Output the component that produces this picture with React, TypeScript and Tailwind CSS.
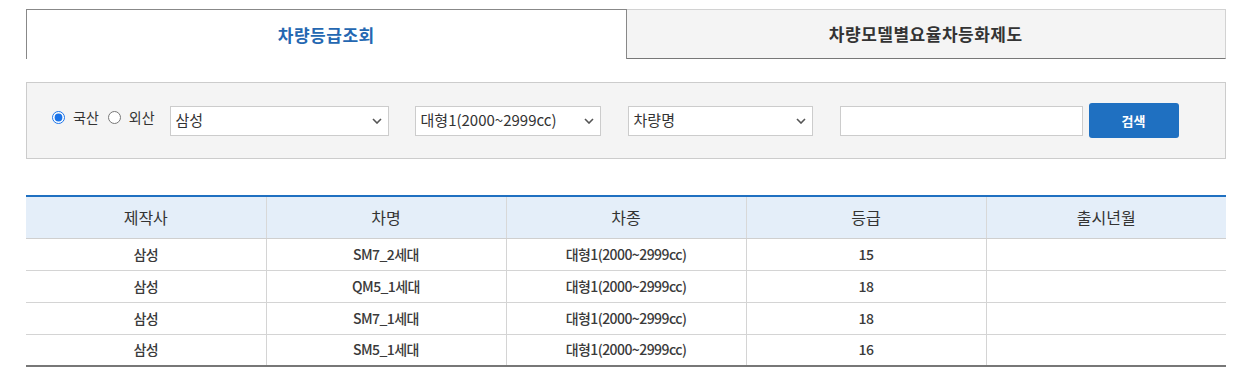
import React, { useState } from 'react';

const rows = [
  { maker: '삼성', name: 'SM7_2세대', type: '대형1(2000~2999cc)', grade: '15', date: '' },
  { maker: '삼성', name: 'QM5_1세대', type: '대형1(2000~2999cc)', grade: '18', date: '' },
  { maker: '삼성', name: 'SM7_1세대', type: '대형1(2000~2999cc)', grade: '18', date: '' },
  { maker: '삼성', name: 'SM5_1세대', type: '대형1(2000~2999cc)', grade: '16', date: '' },
];

const Chevron = () => (
  <svg width="10" height="6" viewBox="0 0 10 6" className="shrink-0">
    <path d="M1 1 L5 5 L9 1" fill="none" stroke="#555" strokeWidth="1.6" />
  </svg>
);

const FakeSelect: React.FC<{ value: string; className: string }> = ({ value, className }) => (
  <div
    className={`h-[30px] bg-white border border-[#cccccc] flex items-center justify-between pl-[5px] pr-[6px] text-[15px] text-[#333] ${className}`}
  >
    <span>{value}</span>
    <Chevron />
  </div>
);

export default function App() {
  const [origin, setOrigin] = useState('domestic');

  return (
    <div
      className="w-[1248px] h-[373px] bg-white overflow-hidden"
      style={{ fontFamily: '"Noto Sans CJK KR", "Noto Sans", sans-serif' }}
    >
      <div className="ml-[26px] w-[1200px] pt-[9px]">
        {/* Tabs */}
        <div className="flex h-[50px]">
          <div className="flex-1 flex items-center justify-center border-t border-l border-r border-[#888] bg-white text-[17px] tracking-[0.03em] font-bold text-[#2467b1]">
            차량등급조회
          </div>
          <div className="flex-1 flex items-center justify-center border-t border-r border-t-[#d2d2d2] border-r-[#d2d2d2] border-b border-b-[#777] bg-[#f4f4f4] text-[17px] tracking-[0.03em] font-bold text-[#333]">
            차량모델별요율차등화제도
          </div>
        </div>

        {/* Search box */}
        <div className="mt-[23px] h-[77px] bg-[#f4f4f4] border border-[#cccccc] flex items-center pl-[25px]">
          <label className="flex items-center gap-[8px] text-[14px] text-[#333] mt-[-7px]">
            <input
              type="radio"
              name="origin"
              checked={origin === 'domestic'}
              onChange={() => setOrigin('domestic')}
              className="w-[13px] h-[13px] m-0 accent-[#1a73e8]"
            />
            국산
          </label>
          <label className="flex items-center gap-[8px] text-[14px] text-[#333] ml-[9px] mt-[-7px]">
            <input
              type="radio"
              name="origin"
              checked={origin === 'foreign'}
              onChange={() => setOrigin('foreign')}
              className="w-[13px] h-[13px] m-0"
            />
            외산
          </label>
          <FakeSelect value="삼성" className="w-[219px] ml-[15px]" />
          <FakeSelect value="대형1(2000~2999cc)" className="w-[186px] ml-[26px]" />
          <FakeSelect value="차량명" className="w-[185px] ml-[27px]" />
          <input className="w-[243px] h-[30px] ml-[27px] bg-white border border-[#cccccc] outline-none px-2 text-[14px]" />
          <button className="w-[90px] h-[35px] ml-[6px] rounded-[3px] bg-[#1f70c1] text-white text-[13px] font-bold">
            검색
          </button>
        </div>

        {/* Result table */}
        <table className="mt-[36px] w-full border-collapse table-fixed border-t-2 border-t-[#1f70c1] border-b-2 border-b-[#777]">
          <thead>
            <tr className="h-[42px] bg-[#e4eef9]">
              {['제작사', '차명', '차종', '등급', '출시년월'].map((h, i) => (
                <th
                  key={h}
                  className={`font-normal text-[16px] text-[#333] border-b border-[#cfcfcf] ${i > 0 ? 'border-l border-l-[#d8d8d8]' : ''}`}
                >
                  {h}
                </th>
              ))}
            </tr>
          </thead>
          <tbody>
            {rows.map((r, idx) => (
              <tr key={idx} className="h-[32px]">
                {[r.maker, r.name, r.type, r.grade, r.date].map((c, i) => (
                  <td
                    key={i}
                    className={`text-center text-[14px] tracking-[-0.04em] font-medium text-[#3a3a3a] ${idx < rows.length - 1 ? 'border-b border-[#d4d4d4]' : ''} ${i > 0 ? 'border-l border-l-[#d4d4d4]' : ''}`}
                  >
                    {c}
                  </td>
                ))}
              </tr>
            ))}
          </tbody>
        </table>
      </div>
    </div>
  );
}
